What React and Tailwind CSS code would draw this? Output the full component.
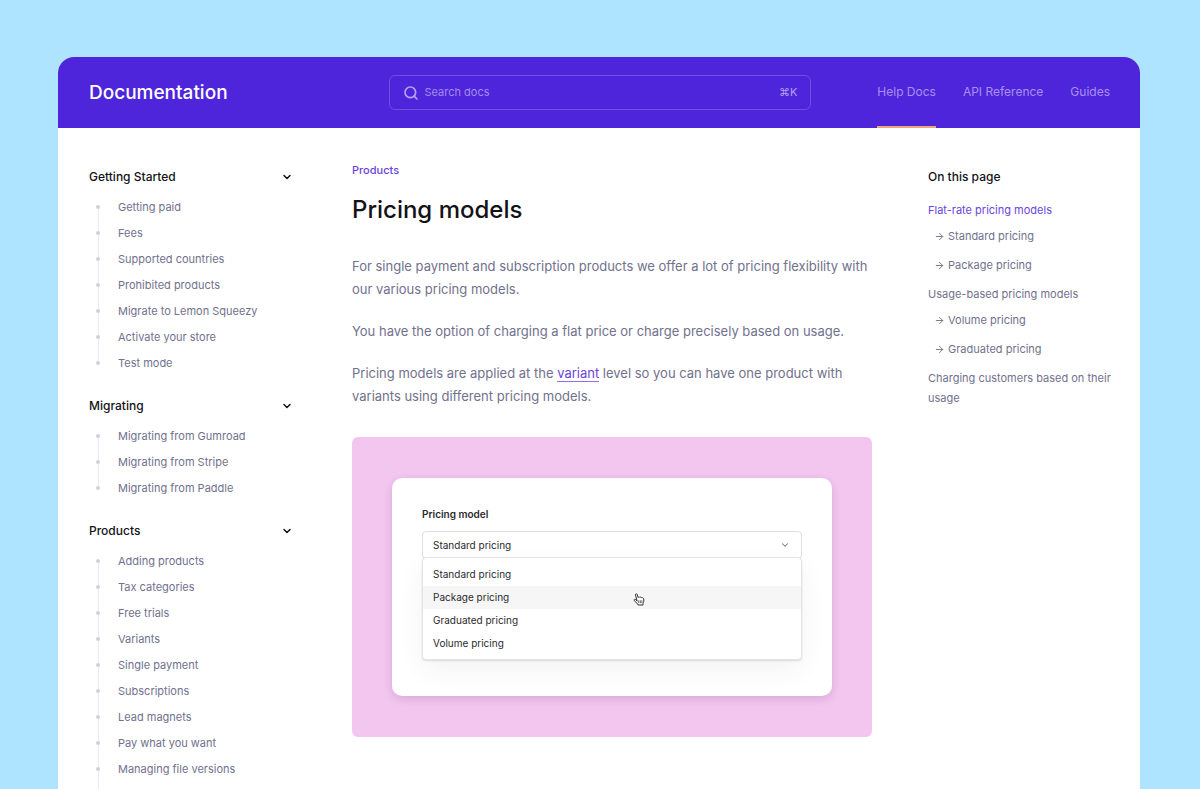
import { useState } from "react";
import { ArrowRight, ChevronDown, Search } from "lucide-react";

const sections = [
  {
    title: "Getting Started",
    items: [
      "Getting paid",
      "Fees",
      "Supported countries",
      "Prohibited products",
      "Migrate to Lemon Squeezy",
      "Activate your store",
      "Test mode",
    ],
  },
  {
    title: "Migrating",
    items: ["Migrating from Gumroad", "Migrating from Stripe", "Migrating from Paddle"],
  },
  {
    title: "Products",
    continues: true,
    items: [
      "Adding products",
      "Tax categories",
      "Free trials",
      "Variants",
      "Single payment",
      "Subscriptions",
      "Lead magnets",
      "Pay what you want",
      "Managing file versions",
    ],
  },
];

const pricingModels = ["Standard pricing", "Package pricing", "Graduated pricing", "Volume pricing"];

function Header() {
  return (
    <header className="grid h-[71px] grid-cols-[1fr_minmax(0,422px)_1fr] items-center bg-[#4e25db] pr-[30px] pl-[31px]">
      <a href="#home" className="text-[19px] leading-6 font-medium text-white">
        Documentation
      </a>
      <label className="flex h-[35px] items-center rounded-md border border-[#714fe4] pr-3 pl-[13px] text-[#b5a3f2]">
        <Search size={16} strokeWidth={2.5} aria-hidden="true" />
        <input
          type="search"
          aria-label="Search docs"
          placeholder="Search docs"
          className="ml-1.5 min-w-0 flex-1 bg-transparent text-[11px] outline-none placeholder:text-[#a38cf0]"
        />
        <kbd className="font-['Inter',sans-serif] text-[11px]">⌘K</kbd>
      </label>
      <nav aria-label="Main" className="flex h-full justify-end gap-[27px] text-[12px] text-[#a990f0]">
        <a href="#help" aria-current="page" className="flex items-center border-b-2 border-[#f0a67c]">
          Help Docs
        </a>
        <a href="#api" className="flex items-center border-b-2 border-transparent">
          API Reference
        </a>
        <a href="#guides" className="flex items-center border-b-2 border-transparent">
          Guides
        </a>
      </nav>
    </header>
  );
}

function NavItem({ label, first, last }) {
  return (
    <li className="flex h-[26px] items-center">
      <span aria-hidden="true" className="flex h-full w-[18px] flex-col items-center">
        <span className={first ? "w-px flex-1" : "w-px flex-1 bg-[#e9eaf1]"} />
        <span className="size-1 rounded-full bg-[#cfd2de]" />
        <span className={last ? "w-px flex-1" : "w-px flex-1 bg-[#e9eaf1]"} />
      </span>
      <a href="#article" className="ml-[11px] text-[11px] text-[#71718d]">
        {label}
      </a>
    </li>
  );
}

function SideNav() {
  const [closed, setClosed] = useState({});
  return (
    <nav aria-label="Documentation" className="flex flex-1 flex-col gap-5">
      {sections.map(({ title, items, continues }) => (
        <section key={title} className={continues ? "flex flex-1 flex-col" : "flex flex-col"}>
          <button
            type="button"
            aria-expanded={!closed[title]}
            onClick={() => setClosed({ ...closed, [title]: !closed[title] })}
            className="mb-[7px] flex h-5 items-center justify-between text-[12px] font-medium text-[#121217]"
          >
            {title}
            <ChevronDown size={12} strokeWidth={3} className="mr-[3px]" aria-hidden="true" />
          </button>
          {!closed[title] && (
            <>
              <ul>
                {items.map((item, i) => (
                  <NavItem
                    key={item}
                    label={item}
                    first={i === 0}
                    last={i === items.length - 1 && !continues}
                  />
                ))}
              </ul>
              {continues && (
                <div aria-hidden="true" className="flex w-[18px] flex-1 justify-center">
                  <span className="w-px bg-[#e9eaf1]" />
                </div>
              )}
            </>
          )}
        </section>
      ))}
    </nav>
  );
}

function HandCursor() {
  return (
    <svg
      viewBox="0 0 24 26"
      className="absolute top-[7px] left-[210px] h-[13px] w-3"
      fill="#fff"
      stroke="#333"
      strokeWidth="2"
      strokeLinecap="round"
      strokeLinejoin="round"
      aria-hidden="true"
    >
      <path d="M8 15.500 5 3.800C4.600 1.200 7.400.6 8.300 2.800L10.300 9C11 7.500 13.200 7.600 13.800 9 14.800 7.800 16.800 8 17.400 9.500 18.800 8.800 20.800 9.600 21.200 11.500 22.300 15 21.600 18 20 20.500V24H10V22.500C7 20.500 4.500 18 2.500 14.800 1.500 12.500 3.800 11.500 5.300 12.800Z" />
      <path d="M11.500 15.500V19.500M14.700 15.500V19.500M17.800 15.500V19.500" strokeWidth="1.500" />
    </svg>
  );
}

function PricingPicker() {
  const [value, setValue] = useState("Standard pricing");
  return (
    <div className="rounded-md bg-[#f2c6ef] px-10 pt-[41px] pb-[41px]">
      <div className="rounded-[10px] bg-white px-[30px] pt-7 pb-9 text-[#2a2a2e] shadow-[0_3px_8px_rgba(90,30,90,0.16)]">
        <label htmlFor="pricing-model" className="block text-[10px] leading-4 font-semibold">
          Pricing model
        </label>
        <div className="relative mt-[9px]">
          <select
            id="pricing-model"
            value={value}
            onChange={(e) => setValue(e.target.value)}
            className="block h-[28px] w-full appearance-none rounded border border-[#dedee3] bg-white px-[10px] text-[10px]"
          >
            {pricingModels.map((m) => (
              <option key={m}>{m}</option>
            ))}
          </select>
          <ChevronDown
            size={10}
            strokeWidth={2.5}
            className="pointer-events-none absolute top-[9px] right-3 text-[#77777f]"
            aria-hidden="true"
          />
        </div>
        <ul
          role="listbox"
          aria-label="Pricing model options"
          className="relative -mt-[2px] rounded border border-[#e4e4e8] bg-white pt-[5px] pb-1 text-[10px] shadow-[0_1px_2px_rgba(0,0,0,0.12),0_10px_28px_rgba(0,0,0,0.05)]"
        >
          {pricingModels.map((m) => (
            <li
              key={m}
              role="option"
              aria-selected={m === value}
              onClick={() => setValue(m)}
              className={
                m === "Package pricing"
                  ? "relative flex h-[23px] items-center bg-[#f6f6f6] px-[10px]"
                  : "flex h-[23px] items-center px-[10px]"
              }
            >
              {m}
              {m === "Package pricing" && <HandCursor />}
            </li>
          ))}
        </ul>
      </div>
    </div>
  );
}

function Article() {
  return (
    <main className="min-w-0">
      <a href="#products" className="block text-[11px] leading-5 font-medium text-[#6b44dd]">
        Products
      </a>
      <h1 className="mt-3 text-[24px] leading-9 font-medium text-[#121217]">Pricing models</h1>
      <div className="mt-[27px] mb-[29px] flex flex-col gap-[19px] text-[13px] leading-[23px] text-[#71718d]">
        <p>
          For single payment and subscription products we offer a lot of pricing flexibility with our
          various pricing models.
        </p>
        <p>You have the option of charging a flat price or charge precisely based on usage.</p>
        <p>
          Pricing models are applied at the{" "}
          <a href="#variant" className="border-b border-[#8f70e6] text-[#6b44dd]">
            variant
          </a>{" "}
          level so you can have one product with variants using different pricing models.
        </p>
      </div>
      <PricingPicker />
    </main>
  );
}

function TocSub({ children }) {
  return (
    <li className="flex items-center gap-[3px] pl-[6px]">
      <ArrowRight size={11} strokeWidth={2} aria-hidden="true" />
      <a href="#section">{children}</a>
    </li>
  );
}

function TableOfContents() {
  return (
    <aside className="pt-[7px] text-[11px] leading-5 text-[#71718d]">
      <h2 className="text-[12px] leading-5 font-medium text-[#121217]">On this page</h2>
      <ul className="mt-[13px] flex flex-col gap-[9px]">
        <li>
          <a href="#flat" className="text-[#6b44dd]">
            Flat-rate pricing models
          </a>
          <ul className="mt-[6px] flex flex-col gap-[9px]">
            <TocSub>Standard pricing</TocSub>
            <TocSub>Package pricing</TocSub>
          </ul>
        </li>
        <li>
          <a href="#usage">Usage-based pricing models</a>
          <ul className="mt-[6px] flex flex-col gap-[9px]">
            <TocSub>Volume pricing</TocSub>
            <TocSub>Graduated pricing</TocSub>
          </ul>
        </li>
        <li>
          <a href="#charging">Charging customers based on their usage</a>
        </li>
      </ul>
    </aside>
  );
}

export default function App() {
  return (
    <div className="flex min-h-screen flex-col bg-[#aee4ff] pt-[57px] pr-[60px] pl-[58px] font-['Inter',sans-serif]">
      <div className="flex flex-1 flex-col overflow-hidden rounded-t-[16px] bg-white">
        <Header />
        <div className="grid flex-1 grid-cols-[207px_minmax(0,1fr)_192px] gap-x-14 pr-5 pl-[31px]">
          <div className="flex flex-col pt-[39px]">
            <SideNav />
          </div>
          <div className="pt-8">
            <Article />
          </div>
          <div className="pt-8">
            <TableOfContents />
          </div>
        </div>
      </div>
    </div>
  );
}
